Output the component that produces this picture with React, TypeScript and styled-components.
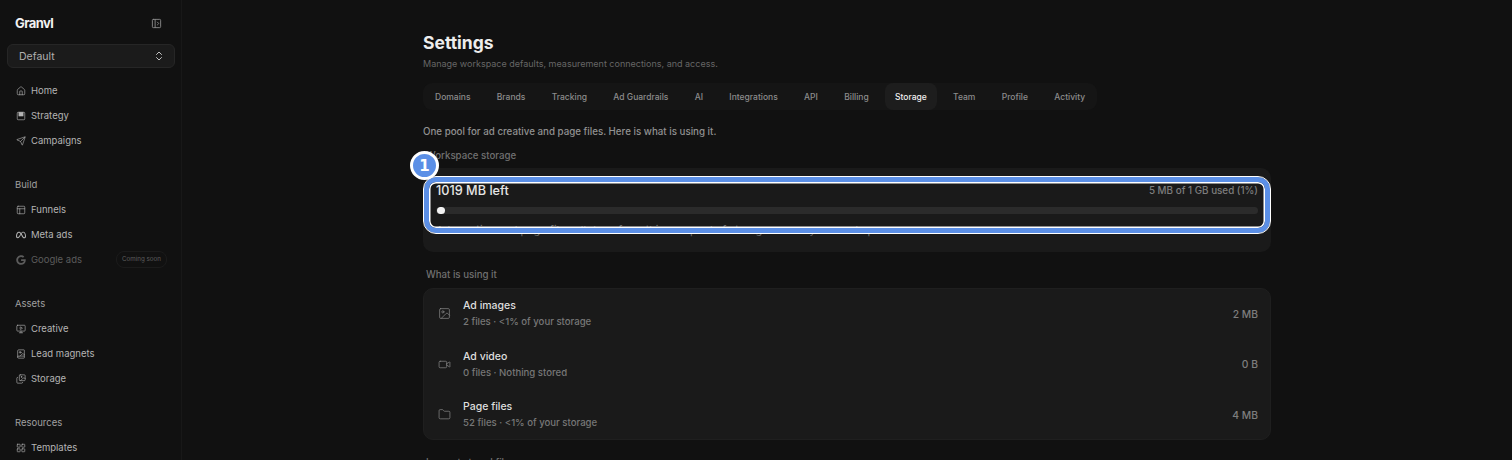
import React from "react";
import styled, {createGlobalStyle} from "styled-components";
import {
    BookImage,
    ChevronsUpDown,
    Folder,
    House,
    Image,
    Images,
    LayoutGrid,
    MonitorPlay,
    PanelLeftOpen,
    PanelsTopLeft,
    Send,
    Video,
} from "lucide-react";
import {FaGoogle, FaMeta} from "react-icons/fa6";

const GlobalStyle = createGlobalStyle`
  html, body {
    margin: 0;
    height: 460px;
    overflow: hidden;
    background: #111111;
    font-family: Inter, "Liberation Sans", sans-serif;
  }
`;

const StrategyIcon = () => (
    <svg viewBox="0 0 24 24" fill="none" stroke="currentColor">
        <rect x="3" y="3" width="18" height="18" rx="2"/>
        <rect x="7" y="3" width="10" height="9" fill="currentColor"/>
    </svg>
);

const navGroups = [
    {
        title: "",
        items: [
            {label: "Home", icon: <House/>},
            {label: "Strategy", icon: <StrategyIcon/>},
            {label: "Campaigns", icon: <Send/>},
        ],
    },
    {
        title: "Build",
        items: [
            {label: "Funnels", icon: <PanelsTopLeft/>},
            {label: "Meta ads", icon: <FaMeta/>},
            {label: "Google ads", icon: <FaGoogle/>, soon: true},
        ],
    },
    {
        title: "Assets",
        items: [
            {label: "Creative", icon: <MonitorPlay/>},
            {label: "Lead magnets", icon: <BookImage/>},
            {label: "Storage", icon: <Images/>},
        ],
    },
    {
        title: "Resources",
        items: [{label: "Templates", icon: <LayoutGrid/>}],
    },
];

const tabs = ["Domains", "Brands", "Tracking", "Ad Guardrails", "AI", "Integrations", "API", "Billing", "Storage", "Team", "Profile", "Activity"];

const usage = [
    {name: "Ad images", detail: "2 files · <1% of your storage", size: "2 MB", icon: <Image/>},
    {name: "Ad video", detail: "0 files · Nothing stored", size: "0 B", icon: <Video/>},
    {name: "Page files", detail: "52 files · <1% of your storage", size: "4 MB", icon: <Folder/>},
];

export default function App() {
    return (
        <Page>
            <GlobalStyle/>
            <Sidebar>
                <Brand>
                    <Logo>Granvl</Logo>
                    <PanelLeftOpen size={11} color="#8a8a8a"/>
                </Brand>
                <WorkspaceSelect>
                    Default
                    <ChevronsUpDown size={12} color="#c0c0c0"/>
                </WorkspaceSelect>
                {navGroups.map((group) => (
                    <NavGroup key={group.title || "main"}>
                        {group.title && <GroupTitle>{group.title}</GroupTitle>}
                        {group.items.map((item) => (
                            <NavItem key={item.label} $muted={"soon" in item}>
                                <NavIcon>{item.icon}</NavIcon>
                                {item.label}
                                {"soon" in item && <SoonBadge>Coming soon</SoonBadge>}
                            </NavItem>
                        ))}
                    </NavGroup>
                ))}
            </Sidebar>
            <Main>
                <Content>
                    <Title>Settings</Title>
                    <Subtitle>Manage workspace defaults, measurement connections, and access.</Subtitle>
                    <Tabs>
                        {tabs.map((tab) => (
                            <Tab key={tab} $active={tab === "Storage"}>{tab}</Tab>
                        ))}
                    </Tabs>
                    <Intro>One pool for ad creative and page files. Here is what is using it.</Intro>
                    <SectionLabel>Workspace storage</SectionLabel>
                    <StorageCard>
                        <StorageHead>
                            <StorageLeft>1019 MB left</StorageLeft>
                            <StorageUsed>5 MB of 1 GB used (1%)</StorageUsed>
                        </StorageHead>
                        <Track>
                            <Fill style={{width: "1%"}}/>
                        </Track>
                        <StorageNote>Ad creative and page files all draw from this one pool of storage across your workspace.</StorageNote>
                        <Highlight>
                            <Step>1</Step>
                        </Highlight>
                    </StorageCard>
                    <UsageLabel>What is using it</UsageLabel>
                    <UsageCard>
                        {usage.map((row) => (
                            <UsageRow key={row.name}>
                                <UsageIcon>{row.icon}</UsageIcon>
                                <UsageText>
                                    <UsageName>{row.name}</UsageName>
                                    <UsageDetail>{row.detail}</UsageDetail>
                                </UsageText>
                                <UsageSize>{row.size}</UsageSize>
                            </UsageRow>
                        ))}
                    </UsageCard>
                    <UsageLabel>Largest stored files</UsageLabel>
                </Content>
            </Main>
        </Page>
    );
}

const Page = styled.div`
  display: flex;
  width: 1512px;
  height: 460px;
  overflow: hidden;
  background: #111111;
`;

const Sidebar = styled.aside`
  flex: none;
  box-sizing: border-box;
  width: 182px;
  padding: 15px 6px 0 7px;
  border-right: 1px solid #181818;
  background: #111111;
`;

const Brand = styled.div`
  display: flex;
  align-items: center;
  justify-content: space-between;
  height: 16px;
  padding: 0 13px 0 8px;
`;

const Logo = styled.div`
  font-size: 13px;
  font-weight: 700;
  letter-spacing: -0.55px;
  color: #f2f2f2;
`;

const WorkspaceSelect = styled.div`
  display: flex;
  align-items: center;
  justify-content: space-between;
  box-sizing: border-box;
  height: 24px;
  margin-top: 13px;
  padding: 0 9px 0 11px;
  border: 1px solid #262626;
  border-radius: 6px;
  background: #1b1b1b;
  font-size: 10.5px;
  color: #b0b0b0;
`;

const NavGroup = styled.div`
  display: flex;
  flex-direction: column;
  margin-top: 10px;

  & + & {
    margin-top: 19px;
  }
`;

const GroupTitle = styled.div`
  display: flex;
  align-items: center;
  height: 25px;
  padding-left: 8px;
  font-size: 9.5px;
  color: #a0a0a0;
`;

const NavItem = styled.div<{ $muted?: boolean }>`
  display: flex;
  align-items: center;
  gap: 5px;
  height: 25px;
  padding-left: 9px;
  font-size: 9.5px;
  color: ${(p) => (p.$muted ? "#5c5c5c" : "#b4b4b4")};
`;

const NavIcon = styled.span`
  display: flex;
  align-items: center;
  justify-content: center;
  width: 10px;
  height: 10px;

  svg {
    width: 10px;
    height: 10px;
    stroke-width: 1.5;
  }
`;

const SoonBadge = styled.span`
  margin-left: auto;
  margin-right: 8px;
  padding: 3px 5px;
  border: 1px solid #1b1b1b;
  border-radius: 8px;
  font-size: 6.25px;
  line-height: 9px;
  white-space: nowrap;
  color: #5e5e5e;
`;

const Main = styled.main`
  flex: 1;
  display: flex;
  justify-content: center;
`;

const Content = styled.div`
  width: 848px;
  padding-top: 33px;
`;

const Title = styled.h1`
  margin: 0;
  font-size: 17.5px;
  line-height: 20px;
  font-weight: 700;
  color: #ededed;
`;

const Subtitle = styled.p`
  margin: 4px 0 0;
  font-size: 9px;
  line-height: 13px;
  color: #666666;
`;

const Tabs = styled.nav`
  display: inline-flex;
  align-items: center;
  gap: 6.3px;
  height: 27px;
  margin-top: 13px;
  padding: 0 2px;
  border-radius: 9px;
  background: #151515;
`;

const Tab = styled.span<{ $active?: boolean }>`
  display: flex;
  align-items: center;
  height: 27px;
  padding: 0 10px;
  border-radius: 8px;
  font-size: 8.5px;
  font-weight: 500;
  color: ${(p) => (p.$active ? "#f0f0f0" : "#8c8c8c")};
  background: ${(p) => (p.$active ? "#1d1d1d" : "transparent")};
`;

const Intro = styled.p`
  margin: 15px 0 0;
  font-size: 9.75px;
  line-height: 13px;
  font-weight: 500;
  color: #929292;
`;

const SectionLabel = styled.div`
  margin: 11px 0 0 3px;
  font-size: 9.7px;
  line-height: 13px;
  font-weight: 500;
  color: #707070;
`;

const UsageLabel = styled(SectionLabel)`
  margin-top: 16px;
`;

const StorageCard = styled.section`
  position: relative;
  box-sizing: border-box;
  height: 84px;
  margin-top: 6px;
  padding: 14px 13px 0;
  border-radius: 10px;
  background: #1a1a1a;
`;

const StorageHead = styled.div`
  display: flex;
  align-items: center;
  justify-content: space-between;
  height: 16px;
`;

const StorageLeft = styled.span`
  font-size: 12.7px;
  font-weight: 500;
  color: #e6e6e6;
`;

const StorageUsed = styled.span`
  font-size: 9.85px;
  font-weight: 500;
  color: #7e7e7e;
`;

const Track = styled.div`
  height: 7px;
  margin-top: 9px;
  padding-left: 1px;
  border-radius: 4px;
  overflow: hidden;
  background: #2b2b2b;
`;

const Fill = styled.div`
  height: 100%;
  min-width: 8px;
  border-radius: 4px;
  background: #f2f2f2;
`;

const StorageNote = styled.p`
  margin: 10px 0 0;
  font-size: 11px;
  line-height: 13px;
  color: #707070;
`;

const Highlight = styled.div`
  position: absolute;
  inset: 9px 1px 19px 1px;
  box-sizing: border-box;
  border: 5px solid #5b8fe6;
  border-radius: 12px;
  outline: 1.5px solid #ffffff;
  box-shadow: inset 0 0 0 1.5px #ffffff;
`;

const Step = styled.span`
  position: absolute;
  top: -31px;
  left: -19px;
  display: flex;
  align-items: center;
  justify-content: center;
  box-sizing: border-box;
  width: 29px;
  height: 29px;
  border: 3px solid #ffffff;
  border-radius: 50%;
  background: #5b8fe6;
  font-family: "DejaVu Sans", sans-serif;
  font-size: 15px;
  font-weight: 700;
  color: #ffffff;
`;

const UsageCard = styled.section`
  display: flex;
  flex-direction: column;
  justify-content: center;
  box-sizing: border-box;
  height: 152px;
  margin-top: 7px;
  padding: 0 12px 0 14px;
  border: 1px solid #1f1f1f;
  border-radius: 10px;
  background: #1a1a1a;
`;

const UsageRow = styled.div`
  flex: none;
  display: flex;
  align-items: center;
  height: 50.5px;
`;

const UsageIcon = styled.span`
  display: flex;
  flex: none;
  width: 25px;
  color: #8e8e8e;

  svg {
    width: 13px;
    height: 13px;
    stroke-width: 1.25;
  }
`;

const UsageText = styled.div`
  flex: 1;
  display: flex;
  flex-direction: column;
  gap: 3px;
`;

const UsageName = styled.span`
  font-size: 10.5px;
  line-height: 13px;
  font-weight: 500;
  color: #dedede;
`;

const UsageDetail = styled.span`
  font-size: 9.6px;
  line-height: 13px;
  font-weight: 500;
  color: #777777;
`;

const UsageSize = styled.span`
  font-size: 10.3px;
  font-weight: 500;
  color: #7e7e7e;
`;
